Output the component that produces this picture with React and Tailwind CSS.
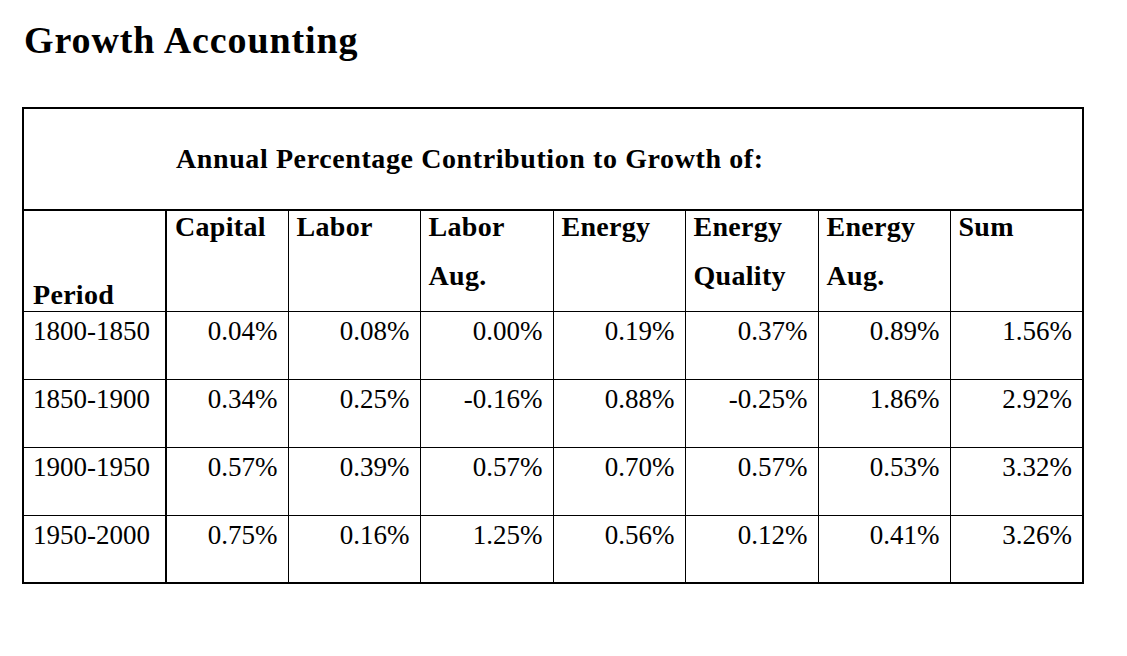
const columns = [
  { key: "capital", label: ["Capital"] },
  { key: "labor", label: ["Labor"] },
  { key: "laborAug", label: ["Labor", "Aug."] },
  { key: "energy", label: ["Energy"] },
  { key: "energyQuality", label: ["Energy", "Quality"] },
  { key: "energyAug", label: ["Energy", "Aug."] },
  { key: "sum", label: ["Sum"] },
];

const rows = [
  ["1800-1850", "0.04%", "0.08%", "0.00%", "0.19%", "0.37%", "0.89%", "1.56%"],
  ["1850-1900", "0.34%", "0.25%", "-0.16%", "0.88%", "-0.25%", "1.86%", "2.92%"],
  ["1900-1950", "0.57%", "0.39%", "0.57%", "0.70%", "0.57%", "0.53%", "3.32%"],
  ["1950-2000", "0.75%", "0.16%", "1.25%", "0.56%", "0.12%", "0.41%", "3.26%"],
];

const widths = ["w-[143px]", "w-[122px]", "w-[132px]", "w-[133px]", "w-[132px]", "w-[133px]", "w-[132px]", "w-[133px]"];

const App = () => {
  return (
    <div
      className="min-h-[656px] bg-white text-black"
      style={{ fontFamily: '"Liberation Serif", "Times New Roman", serif' }}
    >
      <h1 className="pl-[24px] pt-[16px] text-[38px] font-bold leading-[48px] tracking-[0.9px]">
        Growth Accounting
      </h1>

      <div className="pl-[22px] pt-[43px]">
        <table className="w-[1060px] table-fixed border-collapse border-2 border-black">
          <colgroup>
            {widths.map((w, i) => (
              <col key={i} className={w} />
            ))}
          </colgroup>
          <thead>
            <tr>
              <th
                colSpan={8}
                className="h-[102px] border-b-2 border-black pl-[152px] text-left align-middle text-[28px] font-bold leading-[32px] tracking-[0.6px]"
              >
                Annual Percentage Contribution to Growth of:
              </th>
            </tr>
            <tr>
              <th className="h-[101px] border-r-2 border-b border-black pl-[9px] text-left align-bottom text-[28px] font-bold leading-[32px] tracking-[0.3px]">
                Period
              </th>
              {columns.map((c, i) => (
                <th
                  key={c.key}
                  className={`h-[101px] border-b border-black pl-[8px] text-left align-top text-[28px] font-bold leading-[49px] tracking-[0.3px] ${
                    i < columns.length - 1 ? "border-r" : ""
                  }`}
                >
                  <div className="-mt-[9px]">
                    {c.label.map((l) => (
                      <div key={l}>{l}</div>
                    ))}
                  </div>
                </th>
              ))}
            </tr>
          </thead>
          <tbody>
            {rows.map((r) => (
              <tr key={r[0]}>
                {r.map((v, i) => (
                  <td
                    key={i}
                    className={`h-[68px] border-b border-black pt-[3px] align-top text-[27px] leading-[32px] ${
                      i === 0
                        ? "border-r-2 pl-[9px] text-left"
                        : i < r.length - 1
                        ? "border-r pr-[10px] text-right"
                        : "pr-[10px] text-right"
                    }`}
                  >
                    {v}
                  </td>
                ))}
              </tr>
            ))}
          </tbody>
        </table>
      </div>
    </div>
  );
};

export default App;
